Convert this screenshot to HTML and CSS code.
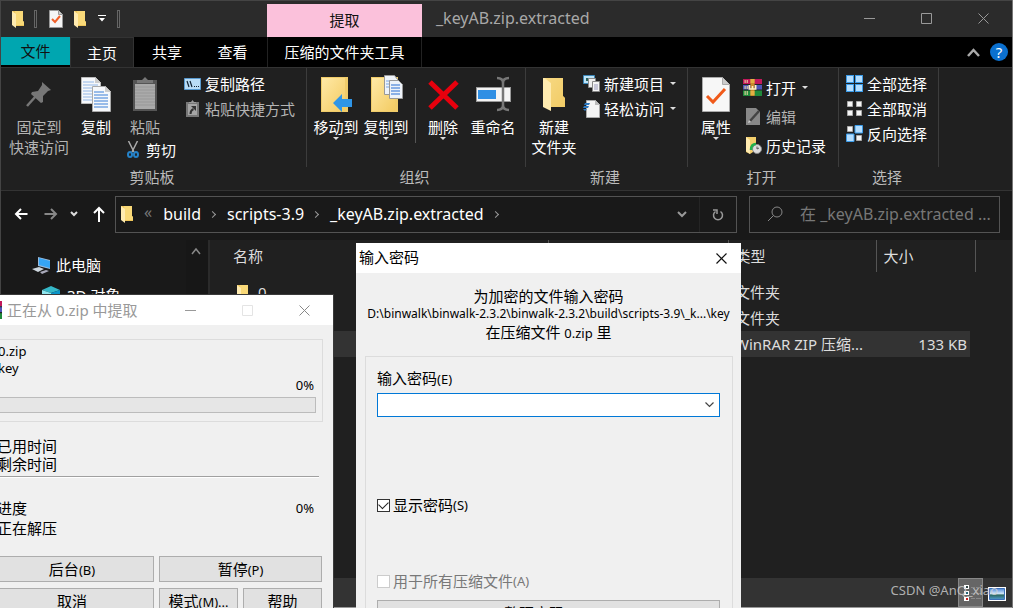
FILE: index.html
```html
<!DOCTYPE html>
<html lang="zh-CN">
<head>
<meta charset="utf-8">
<title>_keyAB.zip.extracted</title>
<link rel="stylesheet" href="styles.css">
</head>
<body>
<svg class="sprite" aria-hidden="true">
  <defs>
    <linearGradient id="gold" x1="0" y1="0" x2="1" y2="1"><stop offset="0" stop-color="#ffe9a6"/><stop offset="1" stop-color="#f3cb62"/></linearGradient>
    <linearGradient id="sky" x1="0" y1="0" x2="0" y2="1"><stop offset="0" stop-color="#4a86d8"/><stop offset=".45" stop-color="#cfe6fa"/><stop offset=".6" stop-color="#2e6a63"/><stop offset="1" stop-color="#4f9ad0"/></linearGradient>
  </defs>
  <symbol id="folder" viewBox="0 0 12 18"><path d="M0 1h11v10l1 1v4H2z" fill="#eec55a"/><path d="M3 1h8v10l1 1v3H4z" fill="#f9d978"/><path d="M0 1l4 3v14l-4-3z" fill="#ffebb0"/></symbol>
  <symbol id="folder-lg" viewBox="0 0 24 36"><path d="M1 2h20v18l2 2v9H6z" fill="url(#gold)"/><path d="M1 2l8 5v28l-8-4z" fill="#ffebb0"/><path d="M9 7v24h14v-9l-2-2V2H3z" fill="#f1cc68" opacity=".55"/></symbol>
  <symbol id="winrar" viewBox="0 0 18 17"><path d="M0 0h18v5H0z" fill="#c2185b"/><path d="M0 5h18v6H0z" fill="#4d55b8"/><path d="M0 11h18v6H0z" fill="#1f8a3b"/><path d="M0 5.500h18M0 11h18" stroke="#222" stroke-width="1"/><path d="M2 1v3M4 1v3M2 7v3M4 7v3M2 12v4M4 12v4" stroke="#e9d8a0"/><path d="M7 0h4v17H7z" fill="#c98a2a"/><path d="M6 6v4h6V6M9 7v3" fill="none" stroke="#fff0c0" stroke-width="1.500"/><path d="M7 1h4M7 3h4M7 13h4M7 15h4" stroke="#ffd35c"/></symbol>
  <symbol id="grid4" viewBox="0 0 17 17"><path d="M0 0h8v8H0zM9 0h8v8H9zM0 9h8v8H0zM9 9h8v8H9z" fill="#3b9be8"/><path d="M1 1h6v6H1zM10 1h6v6h-6zM1 10h6v6H1zM10 10h6v6h-6z" fill="#b5deff"/></symbol>
</svg>

<div class="explorer">
  <header class="titlebar">
    <div class="quick">
      <svg class="qfolder" viewBox="0 0 12 18"><use href="#folder"/></svg>
      <span class="qsep"></span>
      <button class="plain qprops" aria-label="属性"><svg width="14" height="18" viewBox="0 0 14 18"><path d="M.5.500h9l4 4v13H.5z" fill="#f5f5f5" stroke="#999"/><path d="M9.500.500v4h4" fill="#ccc" stroke="#999"/><path d="M3 9l3 3 5-6" fill="none" stroke="#f0602a" stroke-width="2"/></svg></button>
      <button class="plain" aria-label="新建文件夹"><svg class="qfolder" viewBox="0 0 12 18"><use href="#folder"/></svg></button>
      <button class="plain qmore" aria-label="自定义快速访问工具栏"><svg width="8" height="8" viewBox="0 0 8 8"><path d="M0 .5h8" stroke="#fff"/><path d="M1 3h6L4 6.500z" fill="#fff"/></svg></button>
      <span class="qsep"></span>
    </div>
    <div class="context">提取</div>
    <h1 class="caption">_keyAB.zip.extracted</h1>
    <div class="winbtns">
      <button class="plain" aria-label="最小化"><svg width="11" height="11"><path d="M0 5.500h11" stroke="#999"/></svg></button>
      <button class="plain" aria-label="最大化"><svg width="11" height="11"><path d="M.5.500h10v10H.5z" fill="none" stroke="#999"/></svg></button>
      <button class="plain" aria-label="关闭"><svg width="11" height="11"><path d="M.5.500l10 10M10.500.500l-10 10" stroke="#999"/></svg></button>
    </div>
  </header>

  <nav class="tabs">
    <button class="plain tab file">文件</button>
    <button class="plain tab home">主页</button>
    <button class="plain tab share">共享</button>
    <button class="plain tab view">查看</button>
    <button class="plain tab tools">压缩的文件夹工具</button>
    <button class="plain collapse" aria-label="折叠功能区"><svg width="13" height="9"><path d="M1 8l5.500-6L12 8" fill="none" stroke="#aaa" stroke-width="2.500"/></svg></button>
    <button class="plain help" aria-label="帮助">?</button>
  </nav>

  <section class="ribbon">
    <div class="group">
      <div class="items clipboard">
        <button class="plain big pin dim"><svg viewBox="0 0 36 36"><path d="M6 30l9-10" stroke="#777" stroke-width="2.500"/><path d="M21 6l9 8-3 1-5 5v6l-2 1-10-9 1-2 6-1 4-6z" fill="#777"/></svg>固定到<br>快速访问</button>
        <button class="plain big copy"><svg viewBox="0 0 36 36"><path d="M3.500 1.500h14l5 5v21h-19z" fill="#f6f8fb" stroke="#bbb"/><path d="M17 1v6h6z" fill="#ccc"/><path d="M5 6h11M5 9h15M5 12h15M5 15h12M5 18h12M5 21h12M5 24h12" stroke="#92b6e6"/><path d="M14.500 10.500h13l5 5v20h-18z" fill="#f6f8fb" stroke="#aaa"/><path d="M27 10v6h6z" fill="#ccc"/><path d="M16 16h10M16 19h14M16 22h14M16 25h14M16 28h14M16 31h14" stroke="#7aa7e4" stroke-width="1.500"/></svg>复制</button>
        <div class="paste-col">
          <button class="plain big paste dim"><svg viewBox="0 0 36 36"><path d="M6 4h24v31H6z" fill="#555"/><path d="M8 8h20v25H8z" fill="#aaa"/><path d="M8 11h20M8 14h20M8 17h20M8 20h20M8 23h20M8 26h20M8 29h20" stroke="#989898"/><path d="M10 7V4h5l3-3 3 3h5v3z" fill="#777"/></svg>粘贴</button>
          <button class="plain small cut"><svg width="12" height="18" viewBox="0 0 12 18"><path d="M1.500 0l5.500 11M10.500 0L5 11" stroke="#aaa" stroke-width="1.500"/><ellipse cx="3" cy="13.500" rx="2" ry="2.500" fill="none" stroke="#2582c8" stroke-width="2"/><ellipse cx="9" cy="13.500" rx="2" ry="2.500" fill="none" stroke="#2582c8" stroke-width="2"/></svg>剪切</button>
        </div>
        <div class="list">
          <button class="plain small"><svg width="17" height="12" viewBox="0 0 17 12"><path d="M.5.500h16v11H.5z" fill="#b9dcf5" stroke="#5a9bd0"/><path d="M3 3l2 6M6 3l2 6M10 8.500h1M12 8.500h1M14 8.500h1" stroke="#123" stroke-width="1.200"/></svg>复制路径</button>
          <button class="plain small dim"><svg width="17" height="17" viewBox="0 0 17 17"><path d="M2 2h13v15H2z" fill="#777"/><path d="M4 4h9v11H4z" fill="#a5a5a5"/><path d="M5 3V2h2l1.500-2L10 2h2v1z" fill="#999"/><path d="M6.500 14c0-3 .5-4 3-5" fill="none" stroke="#333" stroke-width="2"/><path d="M7 6h5v5z" fill="#333"/></svg>粘贴快捷方式</button>
        </div>
      </div>
      <div class="gname">剪贴板</div>
    </div>

    <div class="group">
      <div class="items organize">
        <button class="plain big"><svg viewBox="0 0 36 36"><path d="M3 1h27v35H3z" fill="#f0cc6a"/><path d="M4 2h23v33H4z" fill="url(#gold)"/><path d="M15 27l9-9v5h10v8H24v5z" fill="#2f96e8"/></svg>移动到<i class="arrow"></i></button>
        <button class="plain big"><svg viewBox="0 0 36 36"><path d="M3 1h27v35H3z" fill="#f0cc6a"/><path d="M4 2h23v33H4z" fill="url(#gold)"/><path d="M16.500-.5h10l3 4v15h-13z" fill="#eef3fa" stroke="#999"/><path d="M18 5h9M18 8h9M18 11h9" stroke="#7aa7e4"/><path d="M21.500 4.500h9l4 4v14h-13z" fill="#eef3fa" stroke="#999"/><path d="M23 9h9M23 12h9M23 15h9M23 18h9" stroke="#6b9be0" stroke-width="1.500"/></svg>复制到<i class="arrow"></i></button>
        <span class="rsep"></span>
        <button class="plain big delete"><svg viewBox="0 0 36 36"><path d="M5 6l27 26M32 6L5 32" stroke="#e8000d" stroke-width="5"/></svg>删除<i class="arrow"></i></button>
        <button class="plain big rename"><svg viewBox="0 0 36 36"><path d="M1 11h35v15H1z" fill="#999"/><path d="M2 12h33v13H2z" fill="#f4f4f4"/><path d="M3 14h18v9H3z" fill="#2f8fe4"/><path d="M28 6v26M22 2c4 0 6 2 6 5 0-3 2-5 6-5M22 34c4 0 6-2 6-5 0 3 2 5 6 5" fill="none" stroke="#777" stroke-width="2.500"/></svg>重命名</button>
      </div>
      <div class="gname">组织</div>
    </div>

    <div class="group">
      <div class="items create">
        <button class="plain big"><svg viewBox="0 0 24 36"><use href="#folder-lg"/></svg>新建<br>文件夹</button>
        <div class="list">
          <button class="plain small"><svg width="17" height="17" viewBox="0 0 17 17"><path d="M.5.500h11v8H.5z" fill="#bde3f7" stroke="#3b87b8"/><path d="M3 3h3v3H3z" fill="#27615c"/><path d="M5.500 3.500h7v9h-7z" fill="#eee" stroke="#888"/><path d="M9.500 6.500h7v10h-7z" fill="#f4f4f4" stroke="#888"/><path d="M11 10h4M11 12h4M11 14h4" stroke="#99b"/></svg>新建项目<i class="arrow"></i></button>
          <button class="plain small"><svg width="17" height="18" viewBox="0 0 17 18"><path d="M3.500.500h9l4 4v13h-13z" fill="#f4f4f4" stroke="#aaa"/><path d="M12 0v5h5z" fill="#bbb"/><path d="M2 3h5L6 5H1zM1 6h5L5 8H0zM0 9h4l-2 2z" fill="#2b78c2"/></svg>轻松访问<i class="arrow"></i></button>
        </div>
      </div>
      <div class="gname">新建</div>
    </div>

    <div class="group">
      <div class="items open">
        <button class="plain big"><svg viewBox="0 0 36 36"><path d="M4.500 1.500h20l7 7v27h-27z" fill="#f7f7f7" stroke="#aaa"/><path d="M24.500 1.500v7h7" fill="#ccc" stroke="#aaa"/><path d="M9 20l6 6 12-13" fill="none" stroke="#f05a1a" stroke-width="3"/></svg>属性<i class="arrow"></i></button>
        <div class="list tall">
          <button class="plain small"><svg width="19" height="17" viewBox="0 0 18 17" preserveAspectRatio="none"><use href="#winrar"/></svg>打开<i class="arrow"></i></button>
          <button class="plain small dim"><svg width="19" height="17" viewBox="0 0 19 17"><path d="M3 0h10l4 4v13H3z" fill="#888"/><path d="M7 13l9-10" stroke="#444" stroke-width="2.500"/><path d="M5 15l1-3 2 2z" fill="#ccc"/></svg>编辑</button>
          <button class="plain small"><svg width="19" height="17" viewBox="0 0 19 17"><path d="M3 0h10v13l-6 4-4-2z" fill="#f3cf6c"/><path d="M3 0l4 3v14l-4-3z" fill="#ffebb0"/><circle cx="14" cy="12" r="4.500" fill="#ddd" stroke="#888"/><path d="M14 9.500V12l2-1" fill="none" stroke="#555"/><path d="M13 7c-4 0-5 3-5 6" fill="none" stroke="#22b14c" stroke-width="2.500"/></svg>历史记录</button>
        </div>
      </div>
      <div class="gname">打开</div>
    </div>

    <div class="group">
      <div class="items select">
        <div class="list">
          <button class="plain small"><svg width="17" height="17" viewBox="0 0 17 17"><use href="#grid4"/></svg>全部选择</button>
          <button class="plain small"><svg width="17" height="17" viewBox="0 0 17 17"><path d="M1.500 1.500h5v5h-5zM10.500 1.500h5v5h-5zM1.500 10.500h5v5h-5zM10.500 10.500h5v5h-5z" fill="#f5f5f5" stroke="#aaa"/></svg>全部取消</button>
          <button class="plain small"><svg width="17" height="17" viewBox="0 0 17 17"><path d="M1.500 1.500h5v5h-5zM10.500 10.500h5v5h-5z" fill="#f5f5f5" stroke="#aaa"/><path d="M9 .5h7.500V8H9zM.5 9H8v7.500H.5z" fill="#b5deff" stroke="#3b9be8"/></svg>反向选择</button>
        </div>
      </div>
      <div class="gname">选择</div>
    </div>
  </section>

  <div class="navbar">
    <button class="plain back" aria-label="后退"><svg width="14" height="12"><path d="M13.500 6H2M7 1L2 6l5 5" fill="none" stroke="#fff" stroke-width="2"/></svg></button>
    <button class="plain forward" aria-label="前进"><svg width="14" height="12"><path d="M.5 6H12M7 1l5 5-5 5" fill="none" stroke="#888" stroke-width="2"/></svg></button>
    <button class="plain recent" aria-label="最近浏览的位置"><svg width="8" height="6"><path d="M1 1l3 3 3-3" fill="none" stroke="#ddd" stroke-width="2"/></svg></button>
    <button class="plain up" aria-label="上移"><svg width="12" height="16"><path d="M6 16V2M1 7l5-5 5 5" fill="none" stroke="#fff" stroke-width="2"/></svg></button>
    <div class="address">
      <svg class="qfolder" viewBox="0 0 12 18"><use href="#folder"/></svg>
      <span class="dbl">«</span>
      <button class="plain">build</button><span class="crumb"></span>
      <button class="plain">scripts-3.9</button><span class="crumb"></span>
      <button class="plain">_keyAB.zip.extracted</button><span class="crumb"></span>
      <button class="plain drop" aria-label="以前的位置"><svg width="10" height="7"><path d="M1 1l4 4 4-4" fill="none" stroke="#999" stroke-width="2"/></svg></button>
      <button class="plain refresh" aria-label="刷新"><svg width="12" height="13" viewBox="0 0 12 13"><path d="M8.500 3.500a4.500 4.500 0 1 1-5 0M1 2h4v4" fill="none" stroke="#999" stroke-width="1.500"/></svg></button>
    </div>
    <label class="search">
      <svg width="16" height="16"><circle cx="10" cy="6" r="5" fill="none" stroke="#888"/><path d="M6.500 9.500L1 15" stroke="#888"/></svg>
      <input type="text" aria-label="搜索" placeholder="在 _keyAB.zip.extracted ...">
    </label>
  </div>

  <main class="content">
    <aside class="sidebar">
      <div class="tree">
        <a class="node" href="#pc"><svg width="20" height="18" viewBox="0 0 20 18"><path d="M6 1l12 3v9L6 10z" fill="#9bd"/><path d="M7 2l11 3v7L7 9z" fill="#35a5f5"/><path d="M0 13l7-2 5 2-6 3z" fill="#cdd6dd"/><path d="M8 16l6-2 3 1-7 3z" fill="#aab"/></svg>此电脑</a>
        <a class="node child" href="#objects"><svg width="18" height="18" viewBox="0 0 18 18"><path d="M0 4l9-4 9 4-9 3z" fill="#35b8c8"/><path d="M0 4l9 3v11l-9-4z" fill="#8ee5ee"/><path d="M18 4L9 7v11l9-4z" fill="#0a95c9"/></svg>3D 对象</a>
      </div>
      <div class="scroll"><svg width="10" height="8"><path d="M1 7l4-5 4 5" fill="none" stroke="#888" stroke-width="1.500"/></svg></div>
    </aside>
    <div class="files">
      <table>
        <colgroup><col class="c-name"><col class="c-date"><col class="c-type"><col class="c-size"></colgroup>
        <thead><tr><th class="name">名称</th><th></th><th>类型</th><th>大小</th></tr></thead>
        <tbody>
          <tr><td class="name"><svg class="qfolder" viewBox="0 0 12 18"><use href="#folder"/></svg>0</td><td></td><td>文件夹</td><td></td></tr>
          <tr><td></td><td></td><td>文件夹</td><td></td></tr>
          <tr class="selected"><td></td><td></td><td>WinRAR ZIP 压缩...</td><td class="num">133 KB</td></tr>
        </tbody>
      </table>
    </div>
  </main>

  <footer class="status">
    <button class="plain details" aria-label="详细信息"><svg width="18" height="18" viewBox="0 0 18 18"><path d="M0 1h5v4H0zM0 7h5v4H0zM0 13h5v4H0z" fill="#fff"/><path d="M2 2h2v2H2z" fill="#344"/><path d="M2 8h2v2H2z" fill="#267"/><path d="M2 14h2v2H2z" fill="#c22"/><path d="M7 3.500h4M12 3.500h5M7 9.500h4M12 9.500h5M7 14.500h4M12 14.500h5" stroke="#888"/></svg></button>
    <button class="plain thumbs" aria-label="大缩略图"><svg width="18" height="14" viewBox="0 0 18 14"><path d="M0 0h18v14H0z" fill="#fff"/><path d="M1.500 1.500h15v11h-15z" fill="url(#sky)" stroke="#3a6fb8"/></svg></button>
  </footer>
</div>

<section class="dialog extract" role="dialog" aria-label="正在从 0.zip 中提取">
  <header class="dtitle inactive">
    <svg width="16" height="18" viewBox="0 0 18 17" preserveAspectRatio="none"><use href="#winrar"/></svg>
    <h2>正在从 0.zip 中提取</h2>
    <div class="winbtns">
      <button class="plain" aria-label="最小化"><svg width="11" height="11"><path d="M0 5.500h11" stroke="#999"/></svg></button>
      <button class="plain" aria-label="最大化" disabled><svg width="11" height="11"><path d="M.5.500h10v10H.5z" fill="none" stroke="#e4e4e4"/></svg></button>
      <button class="plain" aria-label="关闭"><svg width="11" height="11"><path d="M.5.500l10 10M10.500.500l-10 10" stroke="#888"/></svg></button>
    </div>
  </header>
  <div class="ebody">
    <div class="ebox">
      <p class="small-text">0.zip</p>
      <p class="small-text">key</p>
      <p class="small-text pct">0%</p>
      <div class="bar" role="progressbar" aria-valuenow="0"></div>
    </div>
    <div class="times"><p>已用时间</p><p>剩余时间</p></div>
    <div class="prog"><p>进度<span class="small-text">0%</span></p><p>正在解压</p></div>
    <div class="ebtns">
      <button class="btn">后台<span>(B)</span></button>
      <button class="btn wide">暂停<span>(P)</span></button>
      <button class="btn">取消</button>
      <button class="btn">模式<span>(M)...</span></button>
      <button class="btn">帮助</button>
    </div>
  </div>
</section>

<section class="dialog password" role="dialog" aria-label="输入密码">
  <header class="dtitle">
    <h2>输入密码</h2>
    <button class="plain close" aria-label="关闭"><svg width="11" height="11"><path d="M.5.500l10 10M10.500.500l-10 10" stroke="#111" stroke-width="1.200"/></svg></button>
  </header>
  <div class="intro">
    <p>为加密的文件输入密码</p>
    <p class="path">D:\binwalk\binwalk-2.3.2\binwalk-2.3.2\build\scripts-3.9\_k...\key</p>
    <p>在压缩文件 <span class="small-text">0.zip</span> 里</p>
  </div>
  <div class="pbox">
    <label for="pw">输入密码<span class="small-text">(E)</span></label>
    <div class="combo">
      <input id="pw" type="text">
      <button class="plain" aria-label="展开列表"><svg width="9" height="6"><path d="M.5.500l4 4 4-4" fill="none" stroke="#444" stroke-width="1.200"/></svg></button>
    </div>
    <label class="check show"><input type="checkbox" checked>显示密码<span class="small-text">(S)</span></label>
    <label class="check all"><input type="checkbox" disabled>用于所有压缩文件<span class="small-text">(A)</span></label>
    <button class="btn">整理密码<span>(O)...</span></button>
  </div>
</section>

<div class="watermark">CSDN @AnQ_xiao</div>
</body>
</html>
```

FILE: styles.css
```css
* { box-sizing: border-box; }
body {
  margin: 0;
  height: 100vh;
  overflow: hidden;
  position: relative;
  background: #202020;
  color: #fff;
  font: 15px/20px "Noto Sans", "Noto Sans CJK SC", sans-serif;
}
h1, h2, p { margin: 0; font-size: inherit; font-weight: 400; }
svg { flex: none; display: block; }
.sprite { position: absolute; width: 0; height: 0; }
.plain { border: 0; padding: 0; margin: 0; background: none; color: inherit; font: inherit; white-space: nowrap; }
.dim { color: #b4b4b4; }
.arrow { border: 3px solid transparent; border-top-color: #ddd; border-bottom: 0; flex: none; }
.qfolder { width: 12px; height: 18px; }

.explorer { height: 100%; display: flex; flex-direction: column; border-left: 1px solid #444; border-right: 1px solid #777; }

.titlebar { height: 37px; flex: none; display: grid; grid-template-columns: 266px 155px 1fr auto; background: #2b2b2b; border-top: 1px solid #444; }
.quick { display: flex; align-items: center; padding-left: 11px; }
.qsep { width: 3px; height: 18px; border: 1px solid #666; margin-left: 10px; }
.qprops { margin: 0 11px 0 12px; }
.qmore { margin-left: 12px; }
.qmore + .qsep { margin-left: 11px; }
.context { margin-top: 3px; background: #fbc1db; color: #111; text-align: center; line-height: 32px; }
.caption { padding-left: 14px; font-size: 16px; line-height: 34px; color: #a8a8a8; }
.winbtns { display: flex; }
.winbtns button { width: 57px; display: flex; align-items: center; justify-content: center; }
.titlebar .winbtns { padding-bottom: 2px; }

.tabs { height: 30px; flex: none; display: flex; background: #000; }
.tab.file { width: 69px; height: 28px; background: #00a6b0; color: #111; }
.tab.home { width: 64px; background: #202020; border: 1px solid #333; border-bottom: 0; }
.tab.share { width: 66px; }
.tab.view { width: 65px; margin-right: 2px; }
.tab.tools { width: 155px; border: 1px solid #222; border-width: 0 1px; }
.collapse { margin-left: auto; padding-right: 10px; }
.help { width: 18px; height: 18px; margin: 6px 4px 0 0; border-radius: 50%; background: #0b70cf; line-height: 18px; }

.ribbon { height: 123px; flex: none; display: grid; grid-template-columns: 306px 219px 162px 151px 100px; background: #202020; border-top: 1px solid #333; }
.group { display: flex; flex-direction: column; }
.items { display: flex; align-items: flex-start; height: 99px; border-right: 1px solid #3c3c3c; }
.gname { padding-right: 4px; text-align: center; color: #bbb; line-height: 20px; }
.big { width: 50px; padding-top: 8px; display: block; line-height: 20px; text-align: center; }
.big svg { height: 36px; width: 36px; margin: 0 auto 5px; overflow: visible; }
.big .arrow { display: block; width: 6px; margin: 0 auto; }
.pin { width: 66px; }
.copy { width: 48px; }
.clipboard { padding-left: 5px; }
.paste-col { width: 64px; }
.paste { width: 50px; }
.small { display: flex; align-items: center; gap: 4px; height: 25px; }
.cut { padding-left: 7px; gap: 7px; }
.list { padding-top: 3px; }
.list.tall { padding-top: 5px; }
.tall .small { height: 29px; }
.small .arrow { margin-left: 2px; }
.organize { padding-left: 4px; }
.rsep { width: 1px; height: 55px; margin: 20px 4px 0 4px; background: #555; }
.delete { width: 46px; }
.rename { width: 54px; }
.create { padding-left: 3px; gap: 4px; }
.open { padding-left: 3px; gap: 2px; }
.select { padding-left: 7px; }

.navbar { height: 50px; flex: none; display: flex; align-items: center; padding: 0 12px 3px 13px; background: #191919; border-top: 1px solid #333; }
.back, .forward { width: 14px; }
.forward { margin-left: 16px; }
.recent { margin-left: 12px; }
.up { margin: 0 10px 0 15px; }
.address { flex: 1; height: 37px; display: flex; align-items: center; border: 1px solid #535353; padding-left: 5px; font-size: 16px; }
.dbl { margin: 0 11px 4px 11px; color: #777; }
.crumb { width: 5px; height: 5px; margin: 0 12px 0 9px; border: solid #999; border-width: 1px 1px 0 0; transform: rotate(45deg); }
.drop { margin-left: auto; padding: 0 12px; }
.refresh { height: 100%; padding: 0 12px; border-left: 1px solid #252525; }
.search { width: 251px; height: 37px; margin-left: 12px; display: flex; align-items: center; gap: 17px; padding-left: 17px; border: 1px solid #535353; font-size: 16px; }
.search input { flex: 1; min-width: 0; border: 0; padding: 0; outline: 0; background: none; color: #fff; font: inherit; }
.search input::placeholder { color: #777; opacity: 1; }

.content { flex: 1; min-height: 0; display: flex; }
.sidebar { width: 209px; display: flex; background: #191919; border-right: 2px solid #2b2b2b; }
.tree { flex: 1; padding: 10px 0 0 31px; }
.node { display: flex; align-items: center; gap: 4px; height: 30px; color: #fff; text-decoration: none; }
.node.child { padding-left: 10px; gap: 7px; }
.scroll { width: 22px; padding: 7px 0 0 5px; background: #171717; }
.files { flex: 1; padding-left: 12px; overflow: hidden; }
table { border-collapse: collapse; table-layout: fixed; width: 753px; }
.c-name { width: 326px; }
.c-date { width: 180px; }
.c-type { width: 148px; }
.c-size { width: 99px; }
th { height: 32px; padding: 0 7px; border-right: 1px solid #555; text-align: left; font-weight: 400; color: #ddd; }
td { height: 26px; padding: 0 7px; color: #ddd; white-space: nowrap; }
td.num { text-align: right; padding-right: 8px; }
th.name { padding-left: 11px; }
td.name .qfolder { display: inline-block; vertical-align: middle; margin: 0 9px 0 8px; }
tbody::before { content: ""; display: block; height: 7px; }
.selected { background: linear-gradient(90deg, #333 748px, transparent 748px); }

.status { height: 30px; flex: none; display: flex; justify-content: flex-end; align-items: stretch; gap: 5px; padding-right: 6px; background: #333; border-bottom: 1px solid #999; }
.details { width: 25px; padding-left: 5px; background: #666; border: 1px solid #888; }
.thumbs { padding-top: 2px; }

.dialog { position: absolute; bottom: 0; background: #f0f0f0; color: #000; overflow: hidden; }
.small-text, .btn span { font-size: 13px; }
.path { font-size: 12px; }
.dtitle { height: 30px; display: flex; background: #fff; line-height: 29px; }
.dtitle.inactive { color: #999; }
.dtitle .winbtns { margin-left: auto; }
.btn { height: 26px; border: 1px solid #adadad; background: #e1e1e1; color: #000; padding: 0; font: inherit; line-height: 22px; }

.extract { left: -20px; top: 295px; width: 353px; box-shadow: 0 0 0 1px #3a3a3a; }
.extract .dtitle { padding-left: 6px; gap: 5px; align-items: center; }
.extract .dtitle .winbtns { align-self: stretch; }
.ebody { padding: 14px 10px 0 10px; }
.ebox { height: 83px; border: 1px solid #dcdcdc; padding: 3px 6px 0 7px; }
.ebox p { line-height: 17px; }
.ebox .pct, .prog .small-text { padding-right: 2px; }
.ebox .pct { text-align: right; }
.bar { height: 16px; margin-top: 3px; border: 1px solid #bcbcbc; background: #e6e6e6; }
.times { margin: 15px 4px 0 0; padding: 0 0 3px 7px; border-bottom: 1px solid #a0a0a0; box-shadow: 0 1px #fff; }
.times p { line-height: 18px; }
.prog { padding: 21px 7px 0 7px; }
.prog p { display: flex; justify-content: space-between; }
.ebtns { display: grid; grid-template-columns: 1fr 79px 79px; gap: 6px 5px; margin-top: 18px; padding-right: 1px; }
.wide { grid-column: span 2; }

.password { left: 356px; top: 243px; width: 385px; }
.password .dtitle { padding-left: 3px; justify-content: space-between; }
.close { width: 40px; display: flex; align-items: center; justify-content: center; }
.intro { padding-top: 14px; text-align: center; }
.intro p { line-height: 18px; white-space: nowrap; }
.pbox { height: 300px; margin: 14px 8px 0 9px; padding: 11px 12px 0 11px; border: 1px solid #dcdcdc; display: flex; flex-direction: column; }
.combo { height: 24px; flex: none; margin-top: 4px; display: flex; border: 1px solid #0078d7; background: #fff; }
.combo input { flex: 1; min-width: 0; border: 0; outline: 0; font: inherit; }
.combo button { width: 20px; display: flex; align-items: center; justify-content: center; }
.check { display: flex; align-items: center; }
.check input { appearance: none; width: 13px; height: 13px; margin: 0 3px 0 0; border: 1px solid #333; background: #fff; }
.check input:checked::after { content: ""; display: block; width: 8px; height: 5px; margin: 1px; border: solid #222; border-width: 0 0 1px 1px; transform: rotate(-45deg); }
.show { margin-top: 78px; }
.all { margin: 56px 0 9px; color: #787878; }
.all input { border-color: #ccc; }

.watermark { position: absolute; right: 15px; bottom: 8px; font-size: 13px; color: rgba(210, 210, 210, .8); }
```
